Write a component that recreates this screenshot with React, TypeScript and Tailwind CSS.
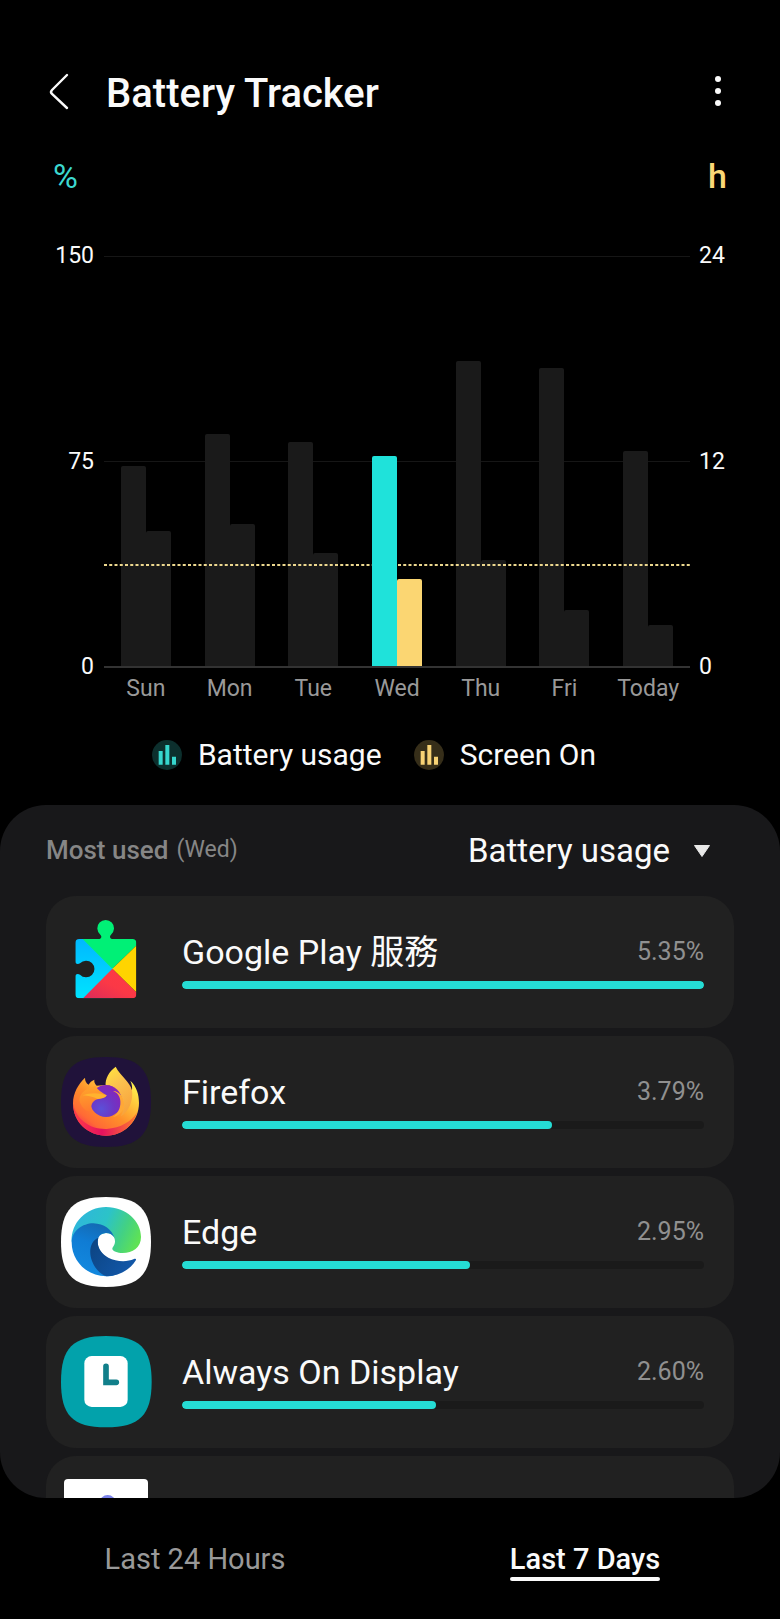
import { ReactNode } from 'react';

const days = [
  { label: 'Sun', battery: 73, screen: 7.9 },
  { label: 'Mon', battery: 85, screen: 8.3 },
  { label: 'Tue', battery: 82, screen: 6.6 },
  { label: 'Wed', battery: 77, screen: 5.1, selected: true },
  { label: 'Thu', battery: 111.5, screen: 6.2 },
  { label: 'Fri', battery: 109, screen: 3.3 },
  { label: 'Today', battery: 78.5, screen: 2.4 },
];

const MAX_BATTERY = 150;
const MAX_HOURS = 24;
const AVERAGE_HOURS = 5.85;

const SQUIRCLE =
  'M168 48C266 48 303 85 303 183S266 318 168 318 33 281 33 183 70 48 168 48Z';

const PlayServicesIcon = () => (
  <svg viewBox="3 30 276 276" className="size-[92px]" aria-hidden="true">
    <defs>
      <clipPath id="puzzle">
        <path d="M58 99H114Q124 99 124 92Q124 89 121 86A25 25 0 1 1 153 86Q150 89 150 92Q150 99 160 99H217A12 12 0 0 1 229 111V265A12 12 0 0 1 217 277H58A12 12 0 0 1 46 265V212Q46 204 53 204Q57 204 60 206A25 25 0 1 0 60 172Q57 174 53 174Q46 174 46 166V111A12 12 0 0 1 58 99Z" />
      </clipPath>
      <linearGradient id="playBlue" x1="0" y1="0" x2="0" y2="1">
        <stop offset="0" stopColor="#00b8ff" />
        <stop offset="1" stopColor="#00e4ff" />
      </linearGradient>
      <linearGradient id="playRed" x1="1" y1="0" x2="0" y2="1">
        <stop offset="0" stopColor="#ff3a44" />
        <stop offset="0.5" stopColor="#fb3846" />
        <stop offset="1" stopColor="#d92a5c" />
      </linearGradient>
    </defs>
    <g clipPath="url(#puzzle)">
      <rect x="40" y="99" width="120" height="180" fill="url(#playBlue)" />
      <path d="M68 99V40H232V116L157 188Z" fill="#00f076" />
      <path d="M232 116V262L157 188Z" fill="#ffd400" />
      <path d="M157 188L232 262V280H66Z" fill="url(#playRed)" />
    </g>
  </svg>
);

const FirefoxIcon = () => (
  <svg viewBox="33 45 276 276" className="size-[92px]" aria-hidden="true">
    <defs>
      <linearGradient id="foxBody" x1="0.9" y1="0.1" x2="0.2" y2="0.9">
        <stop offset="0" stopColor="#fff04f" />
        <stop offset="0.25" stopColor="#ffc53a" />
        <stop offset="0.55" stopColor="#ff8f2a" />
        <stop offset="0.85" stopColor="#ff6a35" />
        <stop offset="1" stopColor="#f8384f" />
      </linearGradient>
      <linearGradient id="foxRim" x1="0" y1="0" x2="1" y2="0">
        <stop offset="0" stopColor="#ff3d48" />
        <stop offset="0.45" stopColor="#e5125f" />
        <stop offset="1" stopColor="#ff7a2e" />
      </linearGradient>
      <linearGradient id="foxTail" x1="0.2" y1="0" x2="0.6" y2="1">
        <stop offset="0" stopColor="#ffe23f" />
        <stop offset="0.4" stopColor="#fbc04e" />
        <stop offset="1" stopColor="#f8a33c" />
      </linearGradient>
      <linearGradient id="foxHead" x1="0.2" y1="0" x2="0.3" y2="1">
        <stop offset="0" stopColor="#ffa62c" />
        <stop offset="1" stopColor="#ff7a2e" />
      </linearGradient>
      <radialGradient id="foxGlobe" cx="0.35" cy="0.75" r="0.8">
        <stop offset="0" stopColor="#5b50d8" />
        <stop offset="0.5" stopColor="#6f35c4" />
        <stop offset="1" stopColor="#8a22b8" />
      </radialGradient>
    </defs>
    <path d={SQUIRCLE} fill="#20123a" />
    <path
      d="M105 110C85 129 69 156 69 187C69 243 114 284 168 284C223 284 267 240 267 186C267 160 260 137 241 119C246 131 248 140 245 150L167 132L140 134C134 128 132 122 133 116C125 119 119 124 116 131C108 126 105 119 105 110Z"
      fill="url(#foxBody)"
    />
    <path
      d="M70 190C78 235 120 266 170 264C212 262 246 240 261 214C250 256 213 284 168 284C113 284 69 243 70 190Z"
      fill="url(#foxRim)"
    />
    <path
      d="M197 77C177 92 165 113 167 134C192 132 214 152 221 180C224 196 220 214 212 226C236 214 250 180 246 148C239 120 212 106 197 77Z"
      fill="url(#foxTail)"
    />
    <circle cx="168" cy="180" r="48" fill="url(#foxGlobe)" />
    <path
      d="M88 176C90 155 110 140 137 134C141 146 156 154 170 163C166 171 156 173 146 174C134 176 125 184 124 198C125 204 126 208 128 212C110 214 92 200 88 176Z"
      fill="url(#foxHead)"
    />
    <path
      d="M98 163C116 155 146 154 170 163C165 171 152 173 143 174C130 168 116 164 98 163Z"
      fill="#ffb22f"
    />
    <path
      d="M189 150C206 156 213 172 211 190C209 208 201 220 189 229C207 225 221 210 222 190C222 168 208 151 189 150Z"
      fill="#ffa838"
    />
  </svg>
);

const EdgeIcon = () => (
  <svg viewBox="33 45 276 276" className="size-[92px]" aria-hidden="true">
    <defs>
      <linearGradient id="edgeWave" x1="0" y1="0.3" x2="1" y2="0.6">
        <stop offset="0" stopColor="#2fb5dd" />
        <stop offset="0.45" stopColor="#2cc3c8" />
        <stop offset="0.75" stopColor="#43d183" />
        <stop offset="1" stopColor="#5fe255" />
      </linearGradient>
      <linearGradient id="edgeBlue" x1="0.6" y1="0" x2="0.3" y2="1">
        <stop offset="0" stopColor="#1469b2" />
        <stop offset="0.4" stopColor="#0f7cd4" />
        <stop offset="1" stopColor="#138ae0" />
      </linearGradient>
      <linearGradient id="edgeDeep" x1="0" y1="0" x2="1" y2="0.6">
        <stop offset="0" stopColor="#0c4380" />
        <stop offset="1" stopColor="#1257a8" />
      </linearGradient>
    </defs>
    <path d={SQUIRCLE} fill="#ffffff" />
    <path
      d="M65 182C62 125 110 78 168 78C228 78 273 120 273 168C273 200 248 216 218 216C202 216 188 211 187 204C187 199 195 193 195 181C195 165 183 156 168 156Z"
      fill="url(#edgeWave)"
    />
    <path
      d="M65 184C65 150 98 127 130 127C162 128 186 146 194 172C189 161 179 156 168 156C153 156 143 168 143 182C143 215 175 240 210 243L200 280C190 285 178 286 168 286C110 285 65 240 65 184Z"
      fill="url(#edgeBlue)"
    />
    <path
      d="M145 170C121 180 115 212 126 240C135 264 153 281 170 286C210 285 242 264 258 237C259 233 256 232 252 234C230 244 198 242 175 230C153 217 138 196 145 170Z"
      fill="url(#edgeDeep)"
    />
  </svg>
);

const AlwaysOnIcon = () => (
  <svg viewBox="33 45 276 276" className="size-[92px]" aria-hidden="true">
    <path
      d="M168 45C269 45 305 82 305 182S269 319 168 319 33 282 33 182 69 45 168 45Z"
      fill="#02a2ab"
    />
    <rect x="103" y="105" width="130" height="153" rx="22" fill="#ffffff" />
    <path
      d="M168 136V184H199"
      fill="none"
      stroke="#117f8a"
      strokeWidth="17"
      strokeLinecap="round"
    />
  </svg>
);

const PeopleIcon = () => (
  <svg viewBox="183 135 276 276" className="size-[92px]" aria-hidden="true">
    <rect x="192" y="144" width="252" height="252" rx="12" fill="#ffffff" />
    <circle cx="323" cy="216" r="24" fill="#7b83eb" />
  </svg>
);

type App = { name: string; usage?: number; icon: ReactNode };

const apps: App[] = [
  { name: 'Google Play 服務', usage: 5.35, icon: <PlayServicesIcon /> },
  { name: 'Firefox', usage: 3.79, icon: <FirefoxIcon /> },
  { name: 'Edge', usage: 2.95, icon: <EdgeIcon /> },
  { name: 'Always On Display', usage: 2.6, icon: <AlwaysOnIcon /> },
  { name: '', icon: <PeopleIcon /> },
];

const TOP_USAGE = 5.35;

const LegendIcon = () => (
  <svg viewBox="0 0 90 90" className="size-[30px]" aria-hidden="true">
    <circle cx="45" cy="45" r="45" fill="currentColor" opacity="0.22" />
    <path
      d="M20 33H32V74H20ZM40 15H52V74H40ZM60 50H72V74H60Z"
      fill="currentColor"
    />
  </svg>
);

const Chart = () => (
  <section className="px-12" aria-label="Usage by day">
    <div className="flex h-12 items-center justify-between px-[5px] text-[34px]">
      <span className="text-[#3cd8d0]">%</span>
      <span className="font-medium text-[#fbd776]">h</span>
    </div>

    <div className="mt-14 flex text-[23px] leading-8">
      <div className="mr-[10px] -mt-4 flex h-[443px] w-[46px] flex-col justify-between text-right">
        <span>150</span>
        <span>75</span>
        <span>0</span>
      </div>

      <div className="flex-1">
        <div className="relative h-[412px] border-b-2 border-[#333333]">
          <div className="absolute inset-x-0 top-0 h-px bg-[#161616]" />
          <div className="absolute inset-x-0 top-1/2 h-px bg-[#161616]" />

          <div className="flex h-full">
            {days.map((day) => (
              <div
                key={day.label}
                className={
                  day.selected
                    ? 'relative z-10 flex flex-1 items-end justify-center'
                    : 'relative flex flex-1 items-end justify-center'
                }
              >
                <div
                  className={
                    day.selected
                      ? 'w-[25px] rounded-t-xs bg-[#1fe2da]'
                      : 'w-[25px] rounded-t-xs bg-[#1a1a1a]'
                  }
                  style={{ height: `${(day.battery / MAX_BATTERY) * 100}%` }}
                />
                <div
                  className={
                    day.selected
                      ? 'w-[25px] rounded-t-xs bg-[#fbd672]'
                      : 'w-[25px] rounded-t-xs bg-[#1a1a1a]'
                  }
                  style={{ height: `${(day.screen / MAX_HOURS) * 100}%` }}
                />
              </div>
            ))}
          </div>

          {/* Average screen time */}
          <svg
            className="absolute left-0 h-[2px] w-full"
            style={{ bottom: `${(AVERAGE_HOURS / MAX_HOURS) * 100}%` }}
            aria-hidden="true"
          >
            <line
              x1="0"
              y1="1"
              x2="100%"
              y2="1"
              stroke="#ecd78e"
              strokeWidth="2"
              strokeDasharray="3 2.25"
            />
          </svg>
        </div>

        <div className="mt-[5px] flex text-[#999999]">
          {days.map((day) => (
            <span key={day.label} className="flex-1 text-center">
              {day.label}
            </span>
          ))}
        </div>
      </div>

      <div className="ml-[9px] -mt-4 flex h-[443px] w-[33px] flex-col justify-between">
        <span>24</span>
        <span>12</span>
        <span>0</span>
      </div>
    </div>

    <div className="mt-[30px] flex justify-center gap-8 pr-8 text-[30px] leading-10">
      <div className="flex items-center gap-4">
        <span className="text-[#36d6cd]">
          <LegendIcon />
        </span>
        Battery usage
      </div>
      <div className="flex items-center gap-4">
        <span className="text-[#f7d274]">
          <LegendIcon />
        </span>
        Screen On
      </div>
    </div>
  </section>
);

const AppRow = ({ name, usage, icon }: App) => (
  <li className="flex h-[132px] shrink-0 items-center gap-[29px] rounded-[30px] bg-[#212121] pl-[15px] pr-[30px]">
    {icon}
    {usage !== undefined && (
      <div className="flex-1 pb-[6px]">
        <div className="flex items-center justify-between leading-[44px]">
          <span className="text-[34px]">{name}</span>
          <span className="text-[25px] text-[#909090]">
            {usage.toFixed(2)}%
          </span>
        </div>
        <div className="mt-[7px] h-2 overflow-hidden rounded-full bg-[#1a1a1a]">
          <div
            className="h-full rounded-full bg-[#25dcd4]"
            style={{ width: `${(usage / TOP_USAGE) * 100}%` }}
          />
        </div>
      </div>
    )}
  </li>
);

const BatteryTrackerPage = () => {
  return (
    <main className="flex h-screen flex-col bg-black font-[Roboto,'Noto_Sans_CJK_TC',sans-serif] text-[#fafafa]">
      <header className="mt-[60px] mb-7 flex h-16 shrink-0 items-center px-12">
        <button aria-label="Back" className="w-[58px]">
          <svg viewBox="0 0 24 38" className="h-[38px] w-6" aria-hidden="true">
            <path
              d="M19 2L4 17Q2 19 4 21L19 35"
              fill="none"
              stroke="currentColor"
              strokeWidth="2.4"
              strokeLinecap="round"
            />
          </svg>
        </button>
        <h1 className="flex-1 pt-1 text-[40px] font-medium">Battery Tracker</h1>
        <button aria-label="More options" className="w-7">
          <svg viewBox="0 0 28 36" className="h-9 w-7" aria-hidden="true">
            <circle cx="14" cy="5" r="3" fill="currentColor" />
            <circle cx="14" cy="17" r="3" fill="currentColor" />
            <circle cx="14" cy="29" r="3" fill="currentColor" />
          </svg>
        </button>
      </header>

      <Chart />

      <section className="mt-[30px] flex min-h-0 flex-1 flex-col overflow-hidden rounded-[46px] bg-[#18181a] px-[46px]">
        <div className="flex h-[91px] shrink-0 items-center justify-between pr-6">
          <h2 className="flex items-center gap-2 text-[26px] font-medium text-[#868686]">
            Most used <span className="text-[23px] font-normal">(Wed)</span>
          </h2>
          <div className="flex items-center gap-6">
            <select
              aria-label="Sort by"
              className="appearance-none field-sizing-content bg-transparent text-[33px]"
            >
              <option>Battery usage</option>
              <option>Screen On</option>
            </select>
            <svg viewBox="0 0 16 12" className="h-3 w-4" aria-hidden="true">
              <path
                d="M0.5 0.5H15.5L8 11.5Z"
                fill="#e8e8e8"
                stroke="#e8e8e8"
                strokeLinejoin="round"
              />
            </svg>
          </div>
        </div>

        <ul className="flex flex-col gap-2">
          {apps.map((app) => (
            <AppRow key={app.name} {...app} />
          ))}
        </ul>
      </section>

      <nav className="flex h-[121px] shrink-0 text-[29px] leading-9">
        <div className="flex flex-1 items-center justify-center">
          <button className="text-[#999999]">Last 24 Hours</button>
        </div>
        <div className="flex flex-1 items-center justify-center">
          <button className="font-medium">
            Last 7 Days
            <span className="-mb-1 block h-1 rounded-full bg-[#fafafa]" />
          </button>
        </div>
      </nav>
    </main>
  );
};

export default BatteryTrackerPage;
